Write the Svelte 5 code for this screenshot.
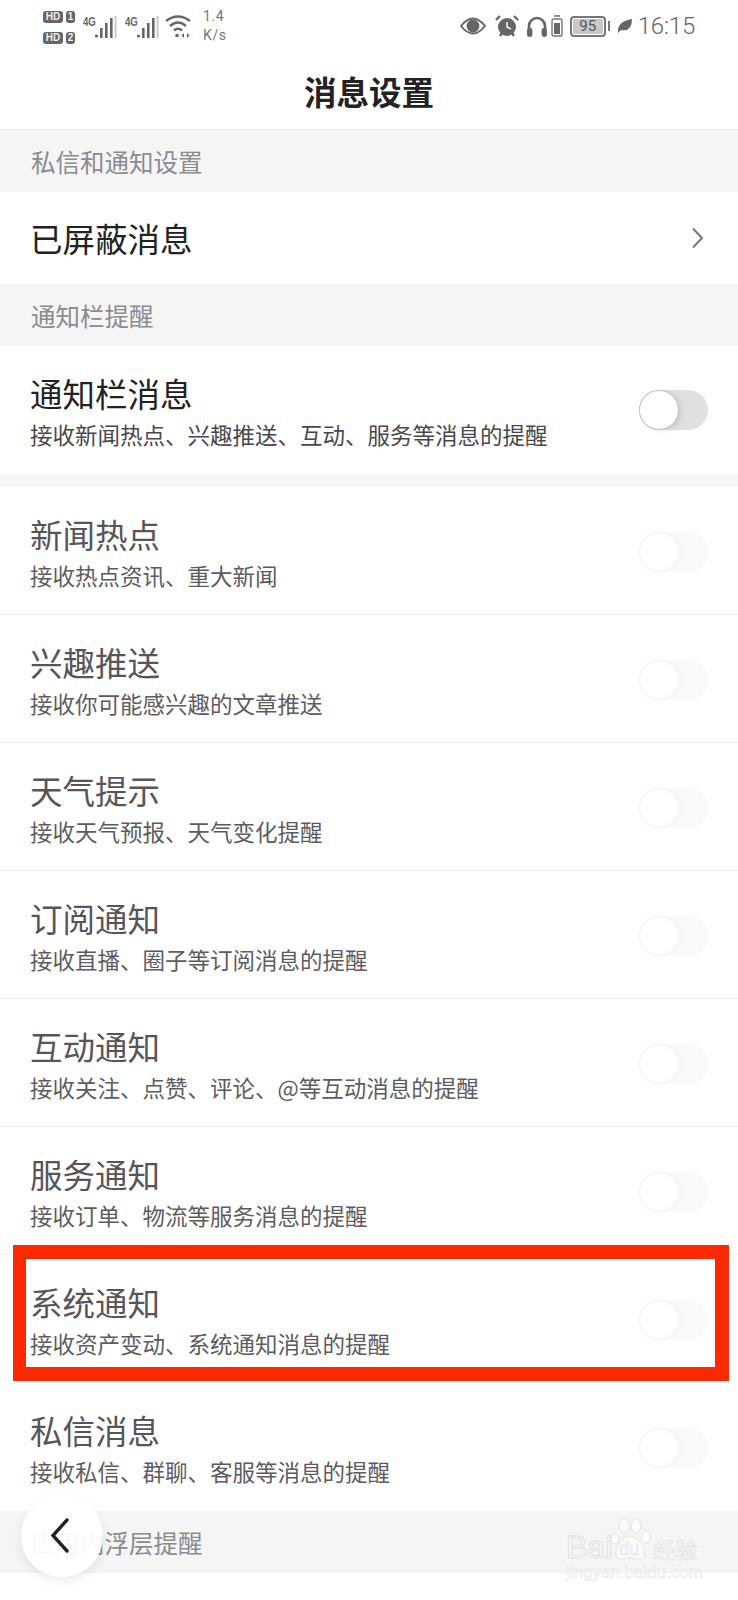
<script>
  const group = {
    label: '通知栏提醒',
    master: { title: '通知栏消息', sub: '接收新闻热点、兴趣推送、互动、服务等消息的提醒' },
    rows: [
      { title: '新闻热点', sub: '接收热点资讯、重大新闻' },
      { title: '兴趣推送', sub: '接收你可能感兴趣的文章推送' },
      { title: '天气提示', sub: '接收天气预报、天气变化提醒' },
      { title: '订阅通知', sub: '接收直播、圈子等订阅消息的提醒' },
      { title: '互动通知', sub: '接收关注、点赞、评论、@等互动消息的提醒' },
      { title: '服务通知', sub: '接收订单、物流等服务消息的提醒' },
      { title: '系统通知', sub: '接收资产变动、系统通知消息的提醒' },
      { title: '私信消息', sub: '接收私信、群聊、客服等消息的提醒' }
    ]
  };
</script>

<div class="page">
  <header class="top">
    <div class="status">
      <div class="sims">
        <div class="sim"><span class="hd">HD</span><span class="num">1</span></div>
        <div class="sim"><span class="hd">HD</span><span class="num">2</span></div>
      </div>
      {#each [0, 1] as n (n)}
        <div class="signal">
          <span class="net">4G</span>
          <svg width="22" height="22" viewBox="0 0 22 22">
            <circle cx="1.5" cy="20" r="1.6" fill="#666" />
            <rect x="5" y="12" width="2.6" height="10" fill="#666" />
            <rect x="10" y="7" width="2.6" height="15" fill="#666" />
            <rect x="15" y="2" width="2.6" height="20" fill="#666" />
            <rect x="19.6" y="0" width="2" height="22" fill="#ccc" />
          </svg>
        </div>
      {/each}
      <svg class="wifi" width="27" height="24" viewBox="0 0 27 24" fill="none" stroke="#666" stroke-width="2.6">
        <path d="M1 7 Q13 -2 25 7" />
        <path d="M5 12 Q13 5 21 12" />
        <path d="M9 16.5 Q13 13 17 16.5" />
        <circle cx="12" cy="21.5" r="1.8" fill="#666" stroke="none" />
        <path d="M19 19 l-2.5 2.5 l2.5 2.5z M22 19 l2.5 2.5 l-2.5 2.5z" fill="#666" stroke="none" />
      </svg>
      <div class="speed"><span>1.4</span><span>K/s</span></div>
      <div class="spacer"></div>
      <svg width="26" height="18" viewBox="0 0 26 18">
        <path d="M1 9 Q13 -6 25 9 Q13 24 1 9Z" fill="none" stroke="#666" stroke-width="2" />
        <circle cx="13" cy="9" r="6.4" fill="#666" />
      </svg>
      <svg class="alarm" width="24" height="22" viewBox="0 0 24 22">
        <circle cx="12" cy="12" r="9" fill="#666" />
        <path d="M12 7 V12 L16 14" fill="none" stroke="#eee" stroke-width="1.6" />
        <path d="M1 5 L5 1 M23 5 L19 1 M5 21 L7 18 M19 21 L17 18" stroke="#666" stroke-width="2.4" />
      </svg>
      <svg class="phones" width="22" height="21" viewBox="0 0 22 21">
        <path d="M3 13 V10 a8 8 0 0 1 16 0 V13" fill="none" stroke="#666" stroke-width="2.6" />
        <rect x="1" y="12" width="5.4" height="9" rx="2.4" fill="#666" />
        <rect x="15.6" y="12" width="5.4" height="9" rx="2.4" fill="#666" />
      </svg>
      <svg class="cell" width="12" height="22" viewBox="0 0 12 22">
        <rect x="3" y="0" width="6" height="1.8" fill="#888" />
        <rect x="1" y="4" width="10" height="17" rx="1.5" fill="none" stroke="#777" stroke-width="1.4" />
        <rect x="3" y="8" width="6" height="11" fill="#666" />
      </svg>
      <div class="battery"><span>95</span></div>
      <span class="nub"></span>
      <svg class="leaf" width="16" height="16" viewBox="0 0 16 16">
        <path d="M1 15 Q0 3 15 1 Q15 14 4 12 L1 15Z" fill="#666" />
      </svg>
      <span class="clock">16:15</span>
    </div>
    <h1>消息设置</h1>
  </header>

  <div class="label">私信和通知设置</div>
  <div class="link">
    <span class="strong">已屏蔽消息</span>
    <svg width="13" height="22" viewBox="0 0 13 22" fill="none" stroke="#777" stroke-width="2">
      <path d="M2 1.5 L11 11 L2 20.5" />
    </svg>
  </div>

  <div class="label">{group.label}</div>
  <div class="master">
    <div class="copy">
      <span class="strong">{group.master.title}</span>
      <span class="sub dark">{group.master.sub}</span>
    </div>
    <div class="switch"><span class="knob"></span></div>
  </div>
  <div class="gap"></div>

  <ul class="rows">
    {#each group.rows as row (row.title)}
      <li>
        <div class="copy">
          <span class="title">{row.title}</span>
          <span class="sub">{row.sub}</span>
        </div>
        <div class="switch faded"><span class="knob"></span></div>
      </li>
    {/each}
  </ul>

  <div class="label">应用内浮层提醒</div>

  <div class="highlight"></div>

  <button class="back" aria-label="返回">
    <svg width="20" height="36" viewBox="0 0 20 36" fill="none" stroke="#222" stroke-width="3.4" stroke-linecap="round">
      <path d="M17 2 L3 17.5 L17 33" />
    </svg>
  </button>

  <div class="mark">
    <div class="mark-top">
      <span class="bai">Bai</span>
      <div class="paw">
        <svg width="40" height="42" viewBox="0 0 40 42" fill="rgba(255,255,255,.55)" stroke="#e2e2e2" stroke-width="1">
          <ellipse cx="4" cy="20" rx="4" ry="5" />
          <ellipse cx="13" cy="7" rx="5" ry="7" />
          <ellipse cx="25" cy="7" rx="5" ry="7" />
          <ellipse cx="35" cy="18" rx="4.5" ry="6" />
          <path d="M19 17 C26 17 36 30 33 37 C30 42 24 39 19 39 C13 39 7 42 5 36 C3 29 12 17 19 17Z" />
        </svg>
        <span class="du">du</span>
      </div>
      <span class="jy">经验</span>
    </div>
    <span class="url">jingyan.baidu.com</span>
  </div>
</div>

<style>
  :global(body) {
    margin: 0;
    background: #fff;
  }

  .page {
    position: relative;
    width: 738px;
    height: 1600px;
    overflow: hidden;
    background: #fff;
    font-family: "Noto Sans CJK SC", "Noto Sans", sans-serif;
  }

  .top {
    height: 129px;
    border-bottom: 1px solid #e8e8e8;
  }

  .status {
    display: flex;
    align-items: center;
    height: 52px;
    padding: 0 43px;
    color: #666;
  }

  .sims {
    display: flex;
    flex-direction: column;
    gap: 9px;
    margin-top: 2px;
  }

  .sim {
    display: flex;
    gap: 3px;
  }

  .hd,
  .num {
    display: block;
    height: 12px;
    border-radius: 3px;
    background: #666;
    color: #eee;
    font: 700 10px/12px "Liberation Sans", sans-serif;
    text-align: center;
  }

  .hd {
    width: 20px;
  }

  .num {
    width: 9px;
  }

  .signal {
    display: flex;
    align-items: flex-end;
    margin-left: 8px;
    width: 34px;
    height: 24px;
  }

  .net {
    align-self: flex-start;
    width: 12px;
    font: 700 12px/16px "Liberation Sans", sans-serif;
    color: #666;
    transform: scaleX(0.8);
    transform-origin: left;
  }

  .signal svg {
    flex: none;
  }

  .wifi {
    margin-left: 6px;
  }

  .speed {
    display: flex;
    flex-direction: column;
    margin-left: 11px;
    font: 400 14px/19px Roboto, sans-serif;
    color: #777;
    letter-spacing: 0.6px;
  }

  .spacer {
    flex: 1;
  }

  .alarm {
    margin-left: 9px;
  }

  .phones {
    margin-left: 7px;
  }

  .cell {
    margin-left: 3px;
  }

  .battery {
    margin-left: 7px;
    width: 36px;
    height: 21px;
    box-sizing: border-box;
    border: 2px solid #777;
    border-radius: 4px;
    padding: 1px;
    display: flex;
  }

  .battery span {
    flex: 1;
    background: #c8c8c8;
    color: #555;
    font: 400 15px/15px Roboto, sans-serif;
    text-align: center;
  }

  .nub {
    width: 2px;
    height: 10px;
    margin-left: 2px;
    background: #777;
  }

  .leaf {
    margin-left: 7px;
  }

  .clock {
    margin-left: 5px;
    font: 300 24px/1 Roboto, sans-serif;
    color: #666;
    letter-spacing: -0.2px;
  }

  h1 {
    margin: 0;
    height: 77px;
    line-height: 77px;
    text-align: center;
    font-size: 32.5px;
    font-weight: 700;
    color: #222;
  }

  .label {
    height: 62px;
    line-height: 64px;
    padding-left: 31px;
    background: #f5f5f6;
    color: #8b8b90;
    font-size: 24.5px;
  }

  .link {
    height: 92px;
    padding: 0 34px 0 30px;
    display: flex;
    align-items: center;
    justify-content: space-between;
  }

  .strong {
    font-size: 32.5px;
    line-height: 44px;
    color: #222;
  }

  .master {
    height: 128px;
    padding: 0 30px;
    display: flex;
    align-items: center;
    justify-content: space-between;
  }

  .gap {
    height: 13px;
    background: #f6f6f6;
  }

  .copy {
    display: flex;
    flex-direction: column;
  }

  .sub {
    margin-top: 3px;
    font-size: 22.5px;
    line-height: 32px;
    color: #5c5c60;
  }

  .sub.dark {
    color: #48484c;
  }

  .rows {
    margin: 0;
    padding: 0;
    list-style: none;
  }

  .rows li {
    height: 128px;
    box-sizing: border-box;
    padding: 2px 30px 0;
    display: flex;
    align-items: center;
    justify-content: space-between;
    border-bottom: 1px solid #f1f1f1;
  }

  .rows li:nth-last-child(-n + 2) {
    border-bottom-color: transparent;
  }

  .title {
    font-size: 32.5px;
    line-height: 44px;
    color: #55555a;
  }

  .switch {
    position: relative;
    width: 69px;
    height: 40px;
    border-radius: 20px;
    background: #e0e0e0;
  }

  .knob {
    position: absolute;
    left: 1px;
    top: 1px;
    width: 38px;
    height: 38px;
    border-radius: 50%;
    background: #fff;
    box-shadow: 0 0 0 1px #c4c4c4, 3px 1px 6px rgba(0, 0, 0, 0.12);
  }

  .switch.faded {
    opacity: 0.18;
  }

  .highlight {
    position: absolute;
    left: 13px;
    top: 1245px;
    width: 716px;
    height: 136px;
    box-sizing: border-box;
    border-style: solid;
    border-color: #fb2a02;
    border-width: 14px 14px 14px 13px;
  }

  .back {
    position: absolute;
    left: 21px;
    top: 1495px;
    width: 82px;
    height: 82px;
    padding: 0;
    border: 0;
    border-radius: 50%;
    background: rgba(255, 255, 255, 0.94);
    box-shadow: 0 4px 12px rgba(0, 0, 0, 0.08);
    display: flex;
    align-items: center;
    justify-content: center;
  }

  .back svg {
    margin-right: 4px;
  }

  .mark {
    position: absolute;
    left: 566px;
    top: 1519px;
    display: flex;
    flex-direction: column;
    color: rgba(255, 255, 255, 0.6);
  }

  .mark-top {
    display: flex;
    align-items: flex-end;
  }

  .bai {
    font: 400 32px/28px "Liberation Sans", sans-serif;
    margin-right: -1px;
    -webkit-text-stroke: 1px #e0e0e0;
  }

  .paw {
    position: relative;
    width: 40px;
    height: 42px;
  }

  .du {
    position: absolute;
    left: 8px;
    bottom: 3px;
    font: 400 18px/18px "Liberation Sans", sans-serif;
    -webkit-text-stroke: 0.6px #e0e0e0;
  }

  .jy {
    margin-left: 2px;
    font-size: 22px;
    line-height: 26px;
    -webkit-text-stroke: 0.6px #e0e0e0;
  }

  .url {
    margin-top: 3px;
    font: 400 17px/18px "Liberation Sans", sans-serif;
    -webkit-text-stroke: 0.5px #e4e4e4;
  }
</style>
